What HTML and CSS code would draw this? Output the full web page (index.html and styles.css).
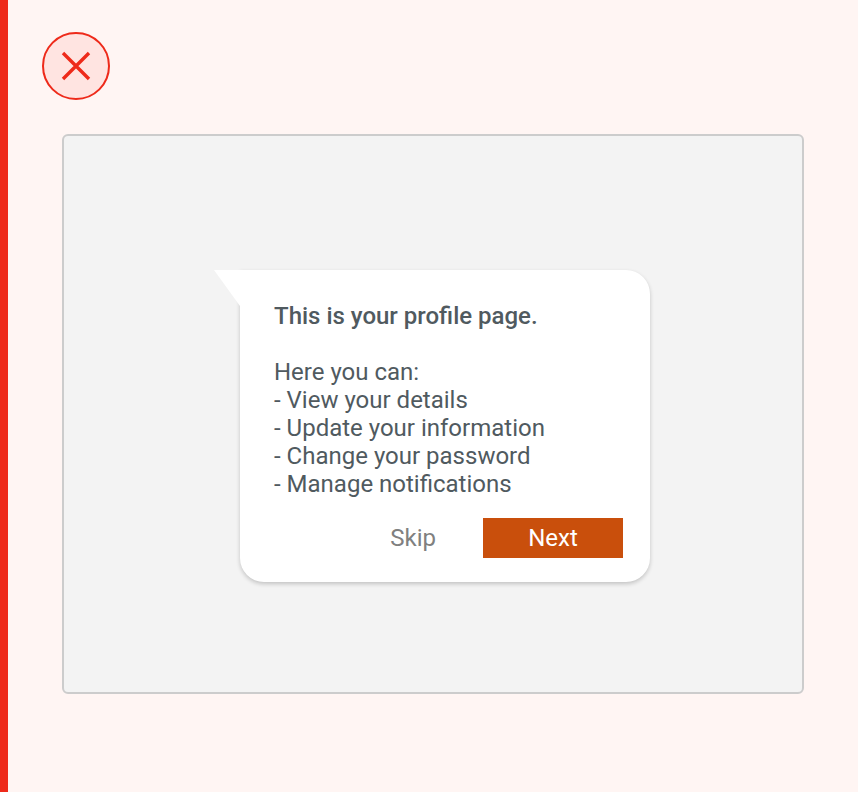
FILE: index.html
```html
<!DOCTYPE html>
<html lang="en">
<head>
    <meta charset="UTF-8">
    <meta name="viewport" content="width=device-width, initial-scale=1.0">
    <title>Profile tour</title>
    <link rel="stylesheet" href="styles.css">
</head>
<body>
    <div class="page">
        <div class="error-icon">
            <svg width="32" height="32" viewBox="0 0 32 32">
                <path d="M3 3 L29 29 M29 3 L3 29" stroke="#ee2a1a" stroke-width="3.4" fill="none"/>
            </svg>
        </div>
        <div class="frame">
            <div class="bubble">
                <p class="title">This is your profile page.</p>
                <p class="text">Here you can:<br>- View your details<br>- Update your information<br>- Change your password<br>- Manage notifications</p>
                <div class="actions">
                    <button class="skip">Skip</button>
                    <button class="next">Next</button>
                </div>
            </div>
        </div>
    </div>
</body>
</html>
```

FILE: styles.css
```css
html, body {
    height: 100%;
}

body {
    font-family: Roboto, "Liberation Sans", sans-serif;
    background-color: #fff5f3;
    margin: 0;
}

.page {
    box-sizing: border-box;
    height: 100%;
    border-left: 8px solid #ee2a1a;
    padding: 32px 54px 98px 34px;
    display: flex;
    flex-direction: column;
    overflow: hidden;
}

.error-icon {
    box-sizing: border-box;
    width: 68px;
    height: 68px;
    border: 2px solid #ee2a1a;
    border-radius: 50%;
    background-color: #ffe4e1;
    display: flex;
    align-items: center;
    justify-content: center;
}

.frame {
    box-sizing: border-box;
    height: 560px;
    margin: 34px 0 0 20px;
    background-color: #f3f3f3;
    border: 2px solid #cccccc;
    border-radius: 6px;
    display: flex;
    align-items: flex-start;
    padding: 134px 0 0 176px;
}

.bubble {
    position: relative;
    box-sizing: border-box;
    width: 410px;
    height: 312px;
    padding: 32px 27px 24px 34px;
    background-color: #fff;
    border-radius: 0 24px 24px 24px;
    box-shadow: 0 2px 4px rgba(0, 0, 0, 0.2);
    color: #505a5f;
    font-size: 24px;
    line-height: 28px;
}

.bubble::before {
    content: "";
    position: absolute;
    left: -26px;
    top: 0;
    width: 26px;
    height: 36px;
    background-color: #fff;
    clip-path: polygon(0 0, 100% 0, 100% 100%);
}

.title {
    margin: 0 0 28px;
    font-weight: 500;
}

.text {
    margin: 0;
}

.actions {
    display: flex;
    justify-content: flex-end;
    align-items: center;
    margin-top: 20px;
}

button {
    border: none;
    padding: 0;
    height: 40px;
    font-family: inherit;
    font-size: 24px;
    cursor: pointer;
}

.skip {
    background: none;
    color: #808080;
    margin-right: 47px;
}

.next {
    width: 140px;
    background-color: #c94f0c;
    color: #fff;
}
```
